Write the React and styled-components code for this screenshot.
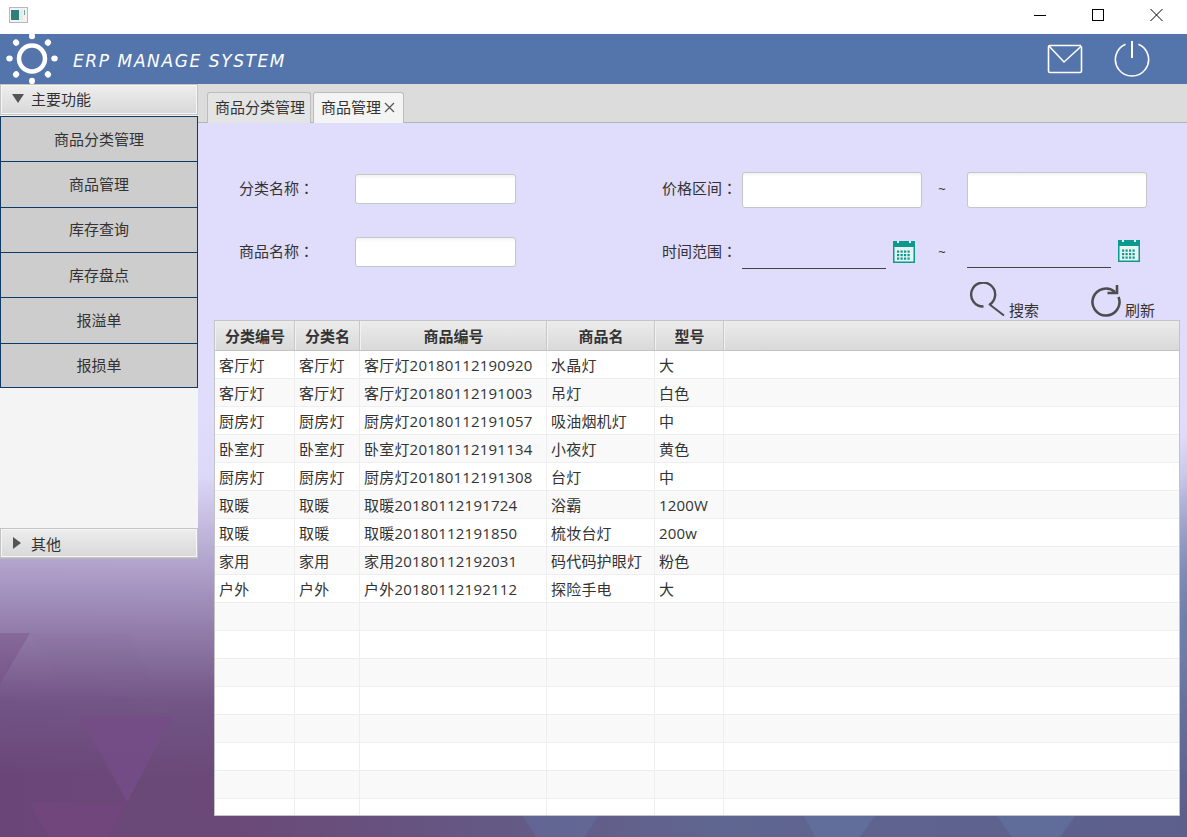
import React from "react";
import styled, { createGlobalStyle } from "styled-components";

const GlobalStyle = createGlobalStyle`
  html, body {
    margin: 0;
    padding: 0;
    background: #fff;
  }
  * {
    box-sizing: border-box;
  }
`;

const FONT = `"Open Sans", "Noto Sans CJK SC", sans-serif`;

const Window = styled.div`
  width: 1187px;
  height: 837px;
  overflow: hidden;
  display: flex;
  flex-direction: column;
  font-family: ${FONT};
  font-size: 15px;
  color: #333;
`;

const TitleBar = styled.div`
  height: 34px;
  flex: none;
  background: #fff;
  display: flex;
  align-items: center;
  justify-content: space-between;
  padding: 0 24px 4px 9px;
`;

const WindowButtons = styled.div`
  display: flex;
  gap: 46px;
  align-items: center;
`;

const Banner = styled.div`
  height: 50px;
  flex: none;
  background: #5475ab;
  display: flex;
  align-items: center;
  padding: 0 37px 0 4px;
  color: #fff;
`;

const BannerTitle = styled.div`
  font-family: "DejaVu Sans", sans-serif;
  font-style: italic;
  font-size: 17px;
  letter-spacing: 1.6px;
  margin: 4px 0 0 13px;
  flex: 1;
  white-space: nowrap;
`;

const BannerIcons = styled.div`
  display: flex;
  align-items: center;
  gap: 31px;
`;

const Body = styled.div`
  flex: 1;
  position: relative;
  display: grid;
  grid-template-columns: 198px 1fr;
  min-height: 0;
  background:
    radial-gradient(ellipse 40px 190px at 100% 72%, rgba(100, 125, 170, 0.85), rgba(100, 125, 170, 0)),
    linear-gradient(to bottom, #e0dcfc 0, #e0dcfc 44%, #dcd8f8 52%, rgba(190, 180, 220, 0.75) 66%, rgba(130, 110, 160, 0.35) 82%, rgba(100, 80, 130, 0) 92%),
    linear-gradient(to right, #6a4678 0, #6a4a78 22%, #5f6690 60%, #5c5f8c 100%);
`;

const Backdrop = styled.svg`
  position: absolute;
  left: 0;
  top: 0;
  width: 1187px;
  height: 753px;
`;

const Sidebar = styled.div`
  position: relative;
  height: 475px;
  display: flex;
  flex-direction: column;
  background: #f4f4f4;
  border-bottom: 1px solid #b8b8b8;
`;

const PaneHeader = styled.div`
  height: ${(p) => p.$height}px;
  flex: none;
  display: flex;
  align-items: center;
  gap: 7px;
  padding: 0 0 ${(p) => p.$lift}px 11px;
  background: linear-gradient(to bottom, #eeeeee, #d8d8d8);
  border: 1px solid #c4c4c4;
  box-shadow: inset 0 0 0 1px #f6f6f6;
`;

const NavList = styled.div`
  flex: 1;
  display: flex;
  flex-direction: column;
  padding-top: 1px;
`;

const NavButton = styled.div`
  height: 45.33px;
  flex: none;
  display: flex;
  align-items: center;
  justify-content: center;
  padding-bottom: 2px;
  background: #cdcdcd;
  border: 1px solid #0f3a66;
  border-bottom-width: 0;
  &:nth-child(6) {
    border-bottom-width: 1px;
  }
`;

const Main = styled.div`
  position: relative;
  display: flex;
  flex-direction: column;
  min-width: 0;
`;

const TabStrip = styled.div`
  height: 39px;
  flex: none;
  display: flex;
  align-items: flex-end;
  gap: 2px;
  padding-left: 9px;
  background: #dcdcdc;
  border-bottom: 1px solid #b4b4b4;
`;

const Tab = styled.div`
  height: 31px;
  margin-bottom: -1px;
  padding: 0 ${(p) => (p.$active ? "8px" : "5px")} 4px 7px;
  display: flex;
  align-items: center;
  gap: 3px;
  border: 1px solid #bcbcbc;
  border-bottom: 0;
  border-radius: 3px 3px 0 0;
  background: ${(p) => (p.$active ? "#f4f4f4" : "#e4e4e4")};
`;

const CloseMark = styled.svg`
  width: 11px;
  height: 11px;
  margin-top: 3px;
  flex: none;
`;

const FormGrid = styled.div`
  display: grid;
  grid-template-columns: 116px 161px 146px 80px 180px 45px 180px;
  grid-template-rows: 36px 32px;
  row-gap: 29px;
  align-items: center;
  padding: 49px 0 0 41px;
`;

const FieldLabel = styled.div`
  white-space: nowrap;
  padding-bottom: 5px;
`;

const Colon = styled.span`
  font-family: "Noto Sans CJK TC", sans-serif;
`;

const TextInput = styled.input`
  display: block;
  width: 100%;
  height: ${(p) => p.$height}px;
  margin-bottom: ${(p) => (p.$height < 36 ? 2 : 0)}px;
  border: 1px solid #c6c6c6;
  border-radius: 3px;
  background: linear-gradient(to bottom, #f2f2f2 0, #fff 4px);
  outline: none;
  padding: 0 6px;
`;

const Tilde = styled.div`
  text-align: center;
  padding: 0 5px 2px 0;
  font-size: 13px;
`;

const DateField = styled.div`
  display: flex;
  gap: 7px;
  height: 32px;
  margin-bottom: ${(p) => (p.$lift ? 2 : 0)}px;
`;

const DateLine = styled.div`
  width: 144px;
  height: 32px;
  border-bottom: 1px solid #444;
`;

const CalendarBox = styled.svg`
  width: 22px;
  height: 22px;
  margin-top: 4px;
  flex: none;
`;

const Actions = styled.div`
  display: flex;
  justify-content: flex-end;
  gap: 51px;
  height: 36px;
  margin-top: 13px;
  padding-right: 32px;
`;

const ActionButton = styled.div`
  display: flex;
  align-items: flex-end;
  gap: ${(p) => p.$gap}px;
  font-size: 15px;
  line-height: 16px;
  svg {
    align-self: flex-start;
    margin-top: ${(p) => p.$iconTop}px;
  }
`;

const Table = styled.div`
  margin: 2px 7px 0 16px;
  height: 496px;
  background: #fff;
  border: 1px solid #c4c4c4;
  overflow: hidden;
`;

const COLUMNS = "80px 65px 187px 108px 69px 1fr";

const HeaderRow = styled.div`
  display: grid;
  grid-template-columns: ${COLUMNS};
  height: 30px;
  background: linear-gradient(to bottom, #ececec, #d9d9d9);
  border-bottom: 1px solid #c4c4c4;
`;

const HeaderCell = styled.div`
  display: flex;
  align-items: center;
  justify-content: center;
  padding-left: 1px;
  font-size: 15px;
  font-weight: 700;
  color: #333;
  border-right: 1px solid #c8c8c8;
  box-shadow: inset 1px 0 0 #f2f2f2;
  &:last-child {
    border-right: 0;
  }
`;

const BodyRow = styled.div`
  display: grid;
  grid-template-columns: ${COLUMNS};
  height: 28px;
  background: ${(p) => (p.$odd ? "#f9f9f9" : "#fff")};
  border-bottom: 1px solid #eeeeee;
`;

const BodyCell = styled.div`
  display: flex;
  align-items: center;
  padding-left: 4px;
  white-space: nowrap;
  letter-spacing: 0.2px;
  color: #333;
  border-right: 1px solid #eeeeee;
  &:last-child {
    border-right: 0;
  }
`;

const HEADERS = ["分类编号", "分类名", "商品编号", "商品名", "型号", ""];

const ROWS = [
  ["客厅灯", "客厅灯", "客厅灯20180112190920", "水晶灯", "大"],
  ["客厅灯", "客厅灯", "客厅灯20180112191003", "吊灯", "白色"],
  ["厨房灯", "厨房灯", "厨房灯20180112191057", "吸油烟机灯", "中"],
  ["卧室灯", "卧室灯", "卧室灯20180112191134", "小夜灯", "黄色"],
  ["厨房灯", "厨房灯", "厨房灯20180112191308", "台灯", "中"],
  ["取暖", "取暖", "取暖20180112191724", "浴霸", "1200W"],
  ["取暖", "取暖", "取暖20180112191850", "梳妆台灯", "200w"],
  ["家用", "家用", "家用20180112192031", "码代码护眼灯", "粉色"],
  ["户外", "户外", "户外20180112192112", "探险手电", "大"],
  ...Array.from({ length: 8 }, () => ["", "", "", "", ""]),
];

const NAV = ["商品分类管理", "商品管理", "库存查询", "库存盘点", "报溢单", "报损单"];

const AppIcon = () => (
  <svg width="19" height="16" viewBox="0 0 19 16">
    <rect x="0.5" y="0.5" width="18" height="15" fill="#f2f2f2" stroke="#b5b8b8" />
    <rect x="2" y="3" width="8" height="10" fill="#2f7f78" />
    <rect x="10" y="3" width="4" height="10" fill="#e4ecea" />
    <rect x="15" y="3" width="1" height="5" fill="#6aa8a0" />
  </svg>
);

const SunLogo = () => {
  const petals = [0, 45, 90, 135, 180, 225, 270, 315];
  return (
    <svg width="56" height="50" viewBox="0 0 56 50">
      <circle cx="28" cy="24.5" r="13" fill="none" stroke="#fff" strokeWidth="4.5" />
      {petals.map((a) => (
        <ellipse key={a} cx="28" cy="2" rx="3" ry="3.2" fill="#fff" transform={`rotate(${a} 28 24.5)`} />
      ))}
    </svg>
  );
};

const MailIcon = () => (
  <svg width="36" height="30" viewBox="0 0 36 30" fill="none" stroke="#fff" strokeWidth="1.6">
    <path d="M34.5 2.5 V27 a1.5 1.5 0 0 1 -1.5 1.5 H3 a1.5 1.5 0 0 1 -1.5 -1.5 V3 a1.5 1.5 0 0 1 1.5 -1.5 H34" />
    <path d="M2 2 L17 18 L34.5 2" />
  </svg>
);

const PowerIcon = () => (
  <svg width="36" height="36" viewBox="0 0 36 36" fill="none" stroke="#fff">
    <path d="M11.5 3.2 A16.6 16.6 0 1 0 24.5 3.2" strokeWidth="1.6" />
    <path d="M18 0 V17" strokeWidth="2" />
  </svg>
);

const Calendar = () => (
  <CalendarBox viewBox="0 0 22 22">
    <rect width="22" height="22" fill="#0b9a8d" />
    <rect x="1.5" y="6" width="19" height="14.5" fill="#e6f3f1" />
    <rect x="4" y="0" width="2" height="2" fill="#e6f3f1" />
    <rect x="16" y="0" width="2" height="2" fill="#e6f3f1" />
    {[9.5, 13, 16.5].map((y) =>
      [4, 7.5, 11, 14.5].map((x) => (
        <rect key={`${x}-${y}`} x={x} y={y} width="2.2" height="2.2" fill="#0b9a8d" />
      ))
    )}
  </CalendarBox>
);

const SearchIcon = () => (
  <svg width="36" height="34" viewBox="0 0 36 34" fill="none" stroke="#4d4d4d">
    <path d="M20.5 22.7 A12 12 0 1 0 14.5 24.5" strokeWidth="2.4" />
    <path d="M20 22 L35 33.5" strokeWidth="2" />
  </svg>
);

const RefreshIcon = () => (
  <svg width="32" height="32" viewBox="0 0 32 32" fill="none" stroke="#4d4d4d" strokeWidth="2.6">
    <path d="M25 7 A13.5 13.5 0 1 0 28.5 12" />
    <path d="M17.5 8 H27 V0" />
  </svg>
);

const App = () => (
  <Window>
    <GlobalStyle />
    <TitleBar>
      <AppIcon />
      <WindowButtons>
        <svg width="12" height="12" viewBox="0 0 12 12" stroke="#000" fill="none">
          <path d="M0 6.5 H12" />
        </svg>
        <svg width="12" height="12" viewBox="0 0 12 12" stroke="#000" fill="none">
          <rect x="0.5" y="0.5" width="11" height="11" />
        </svg>
        <svg width="13" height="12" viewBox="0 0 13 12" stroke="#000" fill="none">
          <path d="M0.5 0 L12.5 12 M12.5 0 L0.5 12" />
        </svg>
      </WindowButtons>
    </TitleBar>

    <Banner>
      <SunLogo />
      <BannerTitle>ERP MANAGE SYSTEM</BannerTitle>
      <BannerIcons>
        <MailIcon />
        <PowerIcon />
      </BannerIcons>
    </Banner>

    <Body>
      <Backdrop viewBox="0 0 1187 753">
        <polygon points="0,549 30,549 0,600" fill="#74487f" fillOpacity="0.35" />
        <polygon points="30,549 128,549 170,629 80,633" fill="#7a6090" fillOpacity="0.07" />
        <polygon points="80,633 173,633 127,718" fill="#764c88" fillOpacity="0.8" />
        <polygon points="30,719 127,719 78,806" fill="#75467f" fillOpacity="0.7" />
        <polygon points="523,732 598,732 585,753 536,753" fill="#62709f" fillOpacity="0.5" />
        <polygon points="804,732 875,732 860,753 815,753" fill="#62709f" fillOpacity="0.8" />
        <polygon points="997,732 1075,732 1060,753 1012,753" fill="#62709f" fillOpacity="0.8" />
      </Backdrop>

      <Sidebar>
        <PaneHeader $height={31} $lift={2}>
          <svg width="12" height="10" viewBox="0 0 12 10">
            <path d="M0 0 H12 L6 9 Z" fill="#555" />
          </svg>
          主要功能
        </PaneHeader>
        <NavList>
          {NAV.map((name) => (
            <NavButton key={name}>{name}</NavButton>
          ))}
        </NavList>
        <PaneHeader $height={30} $lift={0}>
          <svg width="12" height="12" viewBox="0 0 12 12">
            <path d="M1 0 V12 L9 6 Z" fill="#555" />
          </svg>
          其他
        </PaneHeader>
      </Sidebar>

      <Main>
        <TabStrip>
          <Tab>商品分类管理</Tab>
          <Tab $active>
            商品管理
            <CloseMark viewBox="0 0 11 11" stroke="#555" strokeWidth="1.2">
              <path d="M1 1 L10 10 M10 1 L1 10" />
            </CloseMark>
          </Tab>
        </TabStrip>

        <FormGrid>
          <FieldLabel>
            分类名称<Colon>：</Colon>
          </FieldLabel>
          <TextInput $height={30} />
          <span />
          <FieldLabel>
            价格区间<Colon>：</Colon>
          </FieldLabel>
          <TextInput $height={36} />
          <Tilde>~</Tilde>
          <TextInput $height={36} />

          <FieldLabel>
            商品名称<Colon>：</Colon>
          </FieldLabel>
          <TextInput $height={30} />
          <span />
          <FieldLabel>
            时间范围<Colon>：</Colon>
          </FieldLabel>
          <DateField>
            <DateLine />
            <Calendar />
          </DateField>
          <Tilde>~</Tilde>
          <DateField $lift>
            <DateLine />
            <Calendar />
          </DateField>
        </FormGrid>

        <Actions>
          <ActionButton $gap={4} $iconTop={0}>
            <SearchIcon />
            搜索
          </ActionButton>
          <ActionButton $gap={3} $iconTop={3}>
            <RefreshIcon />
            刷新
          </ActionButton>
        </Actions>

        <Table>
          <HeaderRow>
            {HEADERS.map((h, i) => (
              <HeaderCell key={i}>{h}</HeaderCell>
            ))}
          </HeaderRow>
          {ROWS.map((row, i) => (
            <BodyRow key={i} $odd={i % 2 === 1}>
              {row.map((cell, j) => (
                <BodyCell key={j}>{cell}</BodyCell>
              ))}
              <BodyCell />
            </BodyRow>
          ))}
        </Table>
      </Main>
    </Body>
  </Window>
);

export default App;
